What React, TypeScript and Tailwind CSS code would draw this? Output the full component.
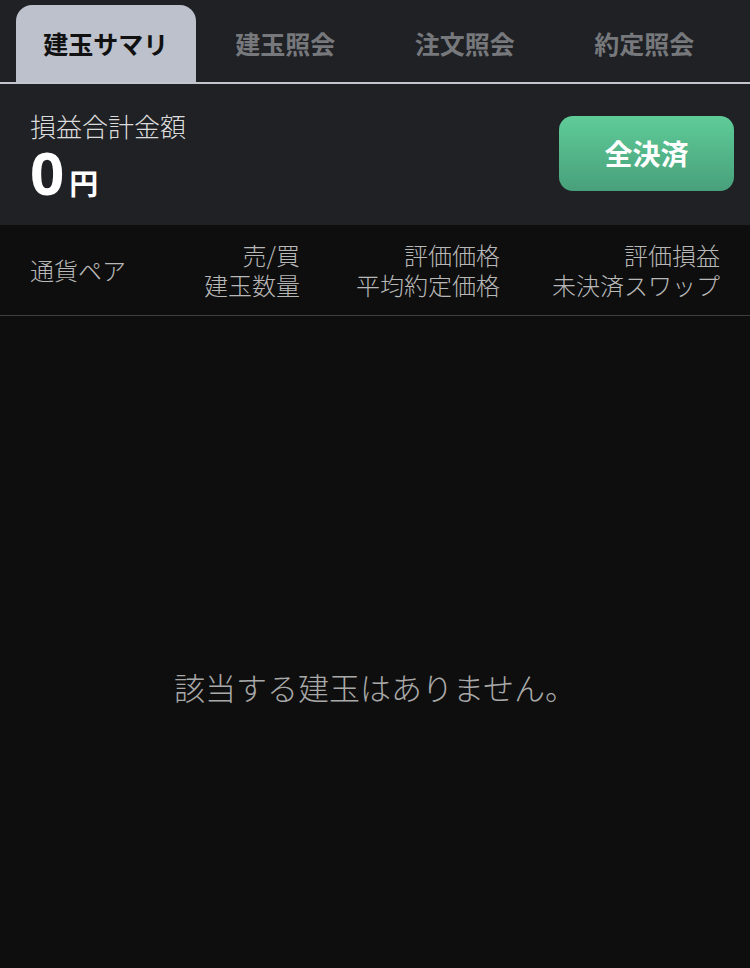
import React from "react";

const font = { fontFamily: '"Noto Sans CJK JP", "Noto Sans", sans-serif' };

export default function App() {
  const tabs = ["建玉サマリ", "建玉照会", "注文照会", "約定照会"];
  return (
    <div
      className="w-[750px] h-[968px] bg-[#0e0e0e] flex flex-col overflow-hidden"
      style={font}
    >
      <div className="bg-[#1f2125] px-4 pt-[5px] border-b-2 border-[#c2c6ce]">
        <div className="grid grid-cols-4 h-[77px]">
          {tabs.map((t, i) => (
            <div
              key={t}
              className={
                i === 0
                  ? "flex items-center justify-center rounded-t-[16px] bg-[#bcc1cc] text-[#111] text-[25px] font-bold"
                  : "flex items-center justify-center text-[#76787c] text-[25px] font-bold"
              }
            >
              {t}
            </div>
          ))}
        </div>
      </div>
      <div className="bg-[#1f2125] h-[141px] flex items-center justify-between pl-[30px] pr-4">
        <div className="flex flex-col -mt-[2px]">
          <div className="text-[26px] leading-[32px] font-light text-[#dcdcdc]">損益合計金額</div>
          <div className="flex items-baseline text-white font-bold mt-[4px]">
            <span className="text-[60px] leading-[52px]" style={{ fontFamily: '"Noto Sans", sans-serif' }}>0</span>
            <span className="text-[29px] leading-[30px] ml-[5px]">円</span>
          </div>
        </div>
        <button className="w-[175px] h-[75px] rounded-[14px] bg-gradient-to-b from-[#5fcc98] to-[#48a07b] text-white text-[28px] font-bold flex items-center justify-center -mt-[3px]">
          全決済
        </button>
      </div>
      <div className="h-[91px] border-b border-[#3e3e3e] grid grid-cols-[150px_120px_200px_220px] items-center px-[30px] text-[24px] leading-[30px] font-light text-[#b8b8b8]">
        <div>通貨ペア</div>
        <div className="text-right">
          <div>売/買</div>
          <div>建玉数量</div>
        </div>
        <div className="text-right">
          <div>評価価格</div>
          <div>平均約定価格</div>
        </div>
        <div className="text-right">
          <div>評価損益</div>
          <div>未決済スワップ</div>
        </div>
      </div>
      <div className="flex-1 flex justify-center pt-[350px]">
        <div className="text-[31px] font-light text-[#a9a9a9] leading-[42px]">該当する建玉はありません。</div>
      </div>
    </div>
  );
}
